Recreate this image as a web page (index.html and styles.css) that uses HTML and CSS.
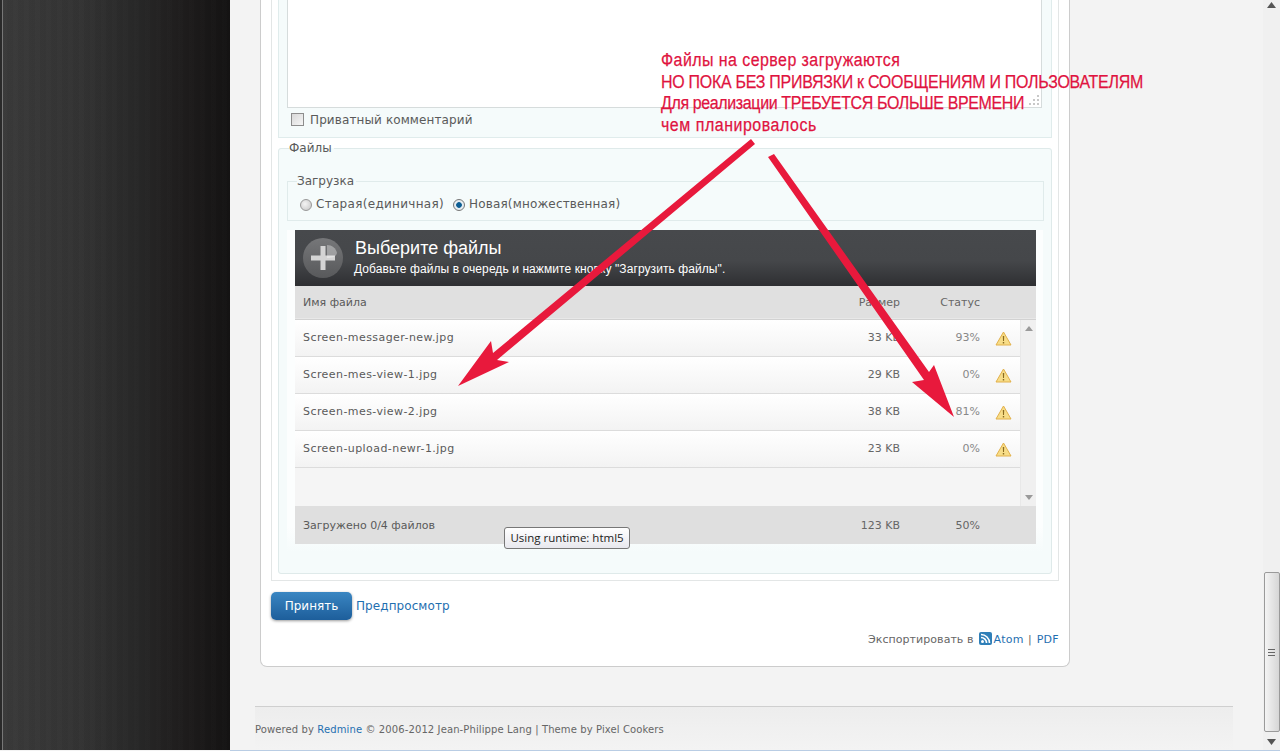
FILE: index.html
```html
<!DOCTYPE html>
<html lang="ru">
<head>
<meta charset="utf-8">
<title>Redmine</title>
<link rel="stylesheet" href="styles.css">
</head>
<body>
<div class="app">
  <aside class="side"></aside>
  <main class="main">
    <section class="card">
      <div class="outer">
        <div class="comment-box">
          <div class="textarea">
            <svg class="grip" width="12" height="12" viewBox="0 0 12 12"><g fill="#c8c8c8"><rect x="9" y="1" width="2" height="2"/><rect x="5" y="5" width="2" height="2"/><rect x="9" y="5" width="2" height="2"/><rect x="1" y="9" width="2" height="2"/><rect x="5" y="9" width="2" height="2"/><rect x="9" y="9" width="2" height="2"/></g></svg>
          </div>
          <label class="private"><span class="check"></span>Приватный комментарий</label>
        </div>
        <fieldset class="files">
          <legend>Файлы</legend>
          <fieldset class="upload">
            <legend>Загрузка</legend>
            <div class="radios">
              <span class="radio"></span><span>Старая(единичная)</span>
              <span class="radio on"></span><span class="multi">Новая(множественная)</span>
            </div>
          </fieldset>
          <div class="uploader">
            <header class="up-head">
              <svg class="plus" width="40" height="40" viewBox="0 0 40 40">
                <defs>
                  <linearGradient id="disc" x1="0" y1="0" x2="0" y2="1"><stop offset="0" stop-color="#767779"/><stop offset="1" stop-color="#58595b"/></linearGradient>
                </defs>
                <circle cx="20" cy="20" r="20" fill="url(#disc)"/>
                <path d="M17.500 8h5v9.500H32v5h-9.500V32h-5v-9.500H8v-5h9.500z" fill="#d4d4d4"/>
                <path d="M24 7c5 0 9 3 10 8-1 4-5 5-10 5z" fill="#fff" opacity=".35"/>
              </svg>
              <div class="up-text">
                <div class="up-title">Выберите файлы</div>
                <div class="up-sub">Добавьте файлы в очередь и нажмите кнопку "Загрузить файлы".</div>
              </div>
            </header>
            <div class="cols row-grid">
              <span>Имя файла</span><span class="num">Размер</span><span class="num">Статус</span><span></span>
            </div>
            <div class="list">
              <div class="rows">
                <div class="row row-grid"><span class="fname">Screen-messager-new.jpg</span><span class="num">33 KB</span><span class="num pct">93%</span><svg class="warn" width="17" height="15" viewBox="0 0 17 15"><path d="M8.500 1 16 14H1z" fill="#f7dd88" stroke="#e2b04a" stroke-linejoin="round"/><path d="M7.800 5h1.400l-.2 5H8zM7.800 11h1.400v1.500H7.800z" fill="#8a6a20"/></svg></div>
                <div class="row row-grid"><span class="fname">Screen-mes-view-1.jpg</span><span class="num">29 KB</span><span class="num pct">0%</span><svg class="warn" width="17" height="15" viewBox="0 0 17 15"><path d="M8.500 1 16 14H1z" fill="#f7dd88" stroke="#e2b04a" stroke-linejoin="round"/><path d="M7.800 5h1.400l-.2 5H8zM7.800 11h1.400v1.500H7.800z" fill="#8a6a20"/></svg></div>
                <div class="row row-grid"><span class="fname">Screen-mes-view-2.jpg</span><span class="num">38 KB</span><span class="num pct">81%</span><svg class="warn" width="17" height="15" viewBox="0 0 17 15"><path d="M8.500 1 16 14H1z" fill="#f7dd88" stroke="#e2b04a" stroke-linejoin="round"/><path d="M7.800 5h1.400l-.2 5H8zM7.800 11h1.400v1.500H7.800z" fill="#8a6a20"/></svg></div>
                <div class="row row-grid"><span class="fname">Screen-upload-newr-1.jpg</span><span class="num">23 KB</span><span class="num pct">0%</span><svg class="warn" width="17" height="15" viewBox="0 0 17 15"><path d="M8.500 1 16 14H1z" fill="#f7dd88" stroke="#e2b04a" stroke-linejoin="round"/><path d="M7.800 5h1.400l-.2 5H8zM7.800 11h1.400v1.500H7.800z" fill="#8a6a20"/></svg></div>
              </div>
              <div class="list-bar">
                <svg width="8" height="5" viewBox="0 0 8 5"><path d="M4 0l4 5H0z" fill="#9a9a9a"/></svg>
                <svg width="8" height="5" viewBox="0 0 8 5"><path d="M4 5L0 0h8z" fill="#9a9a9a"/></svg>
              </div>
            </div>
            <div class="totals row-grid">
              <span>Загружено 0/4 файлов</span><span class="num">123 KB</span><span class="num">50%</span><span></span>
            </div>
          </div>
        </fieldset>
      </div>
      <div class="actions">
        <button class="submit" type="button">Принять</button>
        <a class="link" href="#">Предпросмотр</a>
      </div>
      <div class="export">
        Экспортировать в
        <svg class="rss" width="13" height="13" viewBox="0 0 13 13"><rect width="13" height="13" rx="2" fill="#2f7fb8"/><circle cx="3.500" cy="9.500" r="1.500" fill="#fff"/><path d="M2 5.500a5.500 5.500 0 0 1 5.500 5.500M2 2.500A8.500 8.500 0 0 1 10.500 11" fill="none" stroke="#fff" stroke-width="1.600"/></svg>
        <a class="link wide" href="#">Atom</a><span class="sep">|</span><a class="link wide" href="#">PDF</a>
      </div>
    </section>
    <footer class="foot">Powered by <a class="link" href="#">Redmine</a> © 2006-2012 Jean-Philippe Lang | Theme by Pixel Cookers</footer>
  </main>
  <div class="scroll">
    <svg class="sb-arrow" width="9" height="6" viewBox="0 0 9 6"><path d="M4.500 0 9 6H0z" fill="#555"/></svg>
    <div class="sb-thumb"><span></span><span></span><span></span></div>
    <svg class="sb-arrow" width="9" height="6" viewBox="0 0 9 6"><path d="M4.500 6 0 0h9z" fill="#555"/></svg>
  </div>
</div>
<div class="tip">Using runtime: html5</div>
<div class="note">
  <p class="note-a">Файлы на сервер загружаются</p>
  <p class="note-b">НО ПОКА БЕЗ ПРИВЯЗКИ к СООБЩЕНИЯМ И ПОЛЬЗОВАТЕЛЯМ</p>
  <p class="note-c">Для реализации ТРЕБУЕТСЯ БОЛЬШЕ ВРЕМЕНИ</p>
  <p class="note-d">чем планировалось</p>
</div>
<svg class="arrows" width="1280" height="751" viewBox="0 0 1280 751">
  <path d="M751 139 755 144 497 360 509 362 458 386 491 341 493 353z" fill="#e8193c"/>
  <path d="M768 157 774 154 929 372 934 365 954 417 912 382 924 380z" fill="#e8193c"/>
</svg>
</body>
</html>
```
FILE: styles.css
```css
* { box-sizing: border-box; }
html, body { margin: 0; height: 100%; overflow: hidden; }
body { font-family: "DejaVu Sans", Verdana, sans-serif; font-size: 11px; color: #5a5a5a; background: #f3f3f3; position: relative; }
.app { display: flex; height: 750px; }
body::after { content: ""; position: absolute; left: 230px; right: 0; top: 750px; height: 1px; background: #b9cde4; }

.side { width: 230px; flex: none; background: repeating-linear-gradient(90deg, rgba(255,255,255,.006) 0 5px, rgba(0,0,0,.012) 5px 11px), linear-gradient(90deg, #3a3a3a 0, #333 35%, #282828 58%, #1d1b1b 82%, #141313 100%); border-left: 2px solid #2a2a2a; box-shadow: inset 1px 0 0 #777; }
.main { flex: 1; min-width: 0; display: flex; flex-direction: column; padding-left: 30px; }

.card { width: 810px; height: 667px; flex: none; background: #fff; border: 1px solid #ccc; border-top: 0; border-radius: 0 0 7px 7px; padding: 0 10px; display: flex; flex-direction: column; }
.outer { height: 581px; flex: none; border: 1px solid #e3e6e6; border-top: 0; padding: 0 6px; }

.comment-box { height: 138px; border: 1px solid #e0ecec; border-top: 0; background: #f5fbfb; padding: 0 8px; }
.textarea { height: 108px; background: #fff; border: 1px solid #d6dcdc; border-top: 0; margin-right: 1px; position: relative; }
.grip { position: absolute; right: 1px; bottom: 1px; }
.private { display: flex; align-items: center; gap: 6px; height: 23px; padding-left: 4px; font-size: 12px; letter-spacing: .11px; }
.check { width: 13px; height: 13px; border: 1px solid #8d8d8d; background: linear-gradient(135deg, #d8d8d8, #f6f6f6); }

fieldset { margin: 0; min-width: 0; }
legend { padding: 0 2px 0 0; font-size: 12px; line-height: 14px; }
.files { margin-top: 3px; height: 433px; border: 1px solid #dfeaea; background: #f5fbfb; padding: 0 8px; border-radius: 3px; }
.files > legend { margin-left: 2px; }
.upload { margin: 19px -1px 0 0; height: 47px; border: 1px solid #e0ebeb; padding: 0 0 0 12px; }
.upload legend { margin-left: -3px; }
.radios { display: flex; align-items: center; height: 26px; margin-top: 3px; font-size: 12px; letter-spacing: .3px; }
.radios .multi { letter-spacing: .16px; }
.radio { width: 12px; height: 12px; border-radius: 50%; border: 1px solid #999; background: radial-gradient(circle at 40% 40%, #f4f4f4, #c4c4c4); margin: 1px 4px 0 0; flex: none; }
.radio.on { margin-left: 9px; background: radial-gradient(circle, #0d5e94 0, #0d5e94 35%, #e6edf2 45%); border-color: #777; }

.uploader { margin-top: 9px; padding: 0 7px 8px 8px; background: linear-gradient(#fcfefe 0, #fcfefe 92%, #f5fbfb 100%); }
.up-head { height: 56px; background: linear-gradient(#47494c 0, #45474a 55%, #2e2f32 100%); display: flex; align-items: center; padding: 0 0 0 8px; gap: 12px; color: #fff; font-family: "Liberation Sans", Arial, sans-serif; }
.plus { flex: none; }
.up-text { margin-top: -2px; }
.up-title { font-size: 18px; line-height: 22px; }
.up-sub { font-size: 12px; line-height: 16px; margin-top: 2px; margin-left: -1px; letter-spacing: .08px; }

.row-grid { display: grid; grid-template-columns: 1fr 60px 80px 56px; align-items: center; padding-left: 8px; }
.num { text-align: right; color: #666; }
.cols { height: 34px; background: #e0e0e0; border-bottom: 1px solid #d2d2d2; box-shadow: inset 0 -1px 0 #e8e8e8; }
.list { height: 186px; background: #f5f5f5; display: flex; }
.rows { flex: 1; }
.row { height: 37px; background: linear-gradient(#fff, #f3f3f3); border-bottom: 1px solid #dcdcdc; grid-template-columns: 1fr 60px 80px 40px; padding-bottom: 2px; }
.fname { letter-spacing: .43px; }
.num.pct { color: #888; }
.warn { margin: 3px 0 0 15px; }
.list-bar { width: 16px; border-left: 1px solid #e8e8e8; background: #f0f0f0; display: flex; flex-direction: column; align-items: center; justify-content: space-between; padding: 6px 0; }
.totals { height: 38px; background: #dfdfdf; }

.actions { display: flex; align-items: center; gap: 4px; margin-top: 11px; height: 28px; }
.submit { width: 81px; height: 28px; border: 0; border-radius: 5px; background: linear-gradient(#3a86c2, #1d5e9b); color: #fff; font: 12px "DejaVu Sans", sans-serif; box-shadow: 0 1px 3px rgba(0,0,0,.4); padding: 0; }
.actions .link { font-size: 12px; letter-spacing: .08px; }
.link { color: #1f6fb0; text-decoration: none; }
.wide { letter-spacing: .3px; }
.sep { margin: 0 5px 0 4px; }
.export { margin-top: 12px; text-align: right; color: #666; letter-spacing: .05px; }
.rss { vertical-align: -2px; margin: 0 -2px 0 2px; }

.foot { width: 978px; height: 44px; margin: 39px 0 0 -5px; border-top: 1px solid #cfcfcf; background: linear-gradient(#ededed, #f3f3f3); font-size: 10px; letter-spacing: .11px; color: #666; padding-top: 17px; flex: none; }

.scroll { width: 17px; flex: none; background: #f0f0f0; display: flex; flex-direction: column; align-items: center; }
.sb-arrow { flex: none; }
.scroll .sb-arrow:first-child { margin-top: 2px; margin-bottom: 564px; }
.sb-thumb { width: 16px; height: 160px; border: 1px solid #9a9a9a; border-radius: 2px; background: linear-gradient(90deg, #f4f4f4, #d6d6d6); display: flex; flex-direction: column; align-items: center; justify-content: center; gap: 2px; }
.sb-thumb span { width: 7px; height: 1px; background: #666; }
.scroll .sb-arrow:last-child { margin-top: 7px; }

.tip { position: absolute; left: 504px; top: 527px; width: 126px; height: 22px; border: 1px solid #777; border-radius: 3px; background: linear-gradient(#fff, #e8e8ee); font: 11.500px/20px "Open Sans", sans-serif; color: #222; text-align: center; }
.note { position: absolute; left: 661px; top: 49px; color: #e0133f; font: 18.800px/21.700px "Liberation Sans", Arial, sans-serif; -webkit-text-stroke: .25px #e0133f; white-space: nowrap; transform: scaleX(.85); transform-origin: 0 0; }
.note p { margin: 0; }
.note-a { letter-spacing: .52px; }
.note-b { letter-spacing: -.31px; }
.note-c { letter-spacing: -.42px; }
.note-d { letter-spacing: .62px; }
.arrows { position: absolute; left: 0; top: 0; pointer-events: none; }
```
